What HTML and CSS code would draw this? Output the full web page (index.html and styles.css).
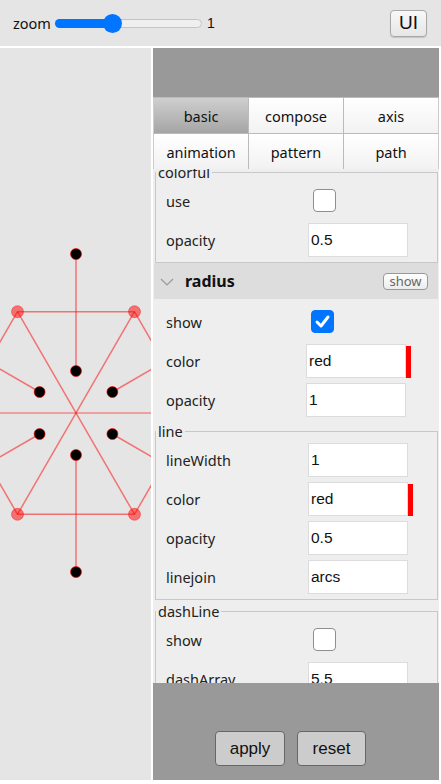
FILE: index.html
```
<!DOCTYPE html>
<html>
<head>
<meta charset="utf-8">
<link rel="stylesheet" href="styles.css">
</head>
<body>
<div class="top">
  <span class="zoom-label">zoom</span>
  <div class="slider"><div class="fill"></div><div class="thumb"></div></div>
  <span class="zoom-val">1</span>
  <button class="ui-btn">UI</button>
</div>
<div class="main">
  <div class="canvas">
    <svg width="151" height="732" viewBox="0 0 151 732">
      <g stroke="rgba(255,0,0,0.5)" stroke-width="1.5" fill="none">
        <line x1="17.5" y1="263.7" x2="134.5" y2="263.7"/>
        <line x1="17.5" y1="466.3" x2="134.5" y2="466.3"/>
        <line x1="17.5" y1="263.7" x2="-41" y2="365"/>
        <line x1="134.5" y1="263.7" x2="193" y2="365"/>
        <line x1="17.5" y1="466.3" x2="-41" y2="365"/>
        <line x1="134.5" y1="466.3" x2="193" y2="365"/>
        <line x1="17.5" y1="263.7" x2="134.5" y2="466.3"/>
        <line x1="134.5" y1="263.7" x2="17.5" y2="466.3"/>
        <line x1="76" y1="206" x2="76" y2="323"/>
        <line x1="76" y1="407" x2="76" y2="524"/>
        <line x1="39.6" y1="344" x2="-61.7" y2="285.5"/>
        <line x1="112.4" y1="344" x2="213.7" y2="285.5"/>
        <line x1="39.6" y1="386" x2="-61.7" y2="444.5"/>
        <line x1="112.4" y1="386" x2="213.7" y2="444.5"/>
      </g>
      <line x1="0" y1="365" x2="151" y2="365" stroke="rgba(255,0,0,0.3)" stroke-width="2"/>
      <g fill="rgba(255,0,0,0.5)" stroke="rgba(255,0,0,0.4)" stroke-width="1">
        <circle cx="17.5" cy="263.7" r="6"/>
        <circle cx="134.5" cy="263.7" r="6"/>
        <circle cx="17.5" cy="466.3" r="6"/>
        <circle cx="134.5" cy="466.3" r="6"/>
      </g>
      <g fill="#000" stroke="rgba(255,0,0,0.6)" stroke-width="1">
        <circle cx="76" cy="206" r="5.5"/>
        <circle cx="76" cy="524" r="5.5"/>
        <circle cx="76" cy="323" r="5.5"/>
        <circle cx="76" cy="407" r="5.5"/>
        <circle cx="39.6" cy="344" r="5.5"/>
        <circle cx="112.4" cy="344" r="5.5"/>
        <circle cx="39.6" cy="386" r="5.5"/>
        <circle cx="112.4" cy="386" r="5.5"/>
      </g>
    </svg>
  </div>
  <div class="panel">
    <div class="panel-head"></div>
    <div class="tabs">
      <div class="tab active">basic</div>
      <div class="tab">compose</div>
      <div class="tab">axis</div>
      <div class="tab">animation</div>
      <div class="tab">pattern</div>
      <div class="tab">path</div>
    </div>
    <div class="content">
      <fieldset class="group first">
        <legend>colorful</legend>
        <div class="row"><span class="label">use</span><span class="ctrl"><span class="check"></span></span></div>
        <div class="row"><span class="label">opacity</span><span class="ctrl"><span class="input">0.5</span></span></div>
      </fieldset>
      <div class="section-head">
        <svg class="chev" width="14" height="10" viewBox="0 0 14 10"><polyline points="1,2 7,8 13,2" fill="none" stroke="#999" stroke-width="1.2"/></svg>
        <span class="section-title">radius</span>
        <span class="mini-btn">show</span>
      </div>
      <div class="plain">
        <div class="row"><span class="label">show</span><span class="ctrl"><span class="check on"><svg width="23" height="23" viewBox="0 0 23 23"><polyline points="6,12 10,16 17,7" fill="none" stroke="#fff" stroke-width="3" stroke-linecap="round" stroke-linejoin="round"/></svg></span></span></div>
        <div class="row"><span class="label">color</span><span class="ctrl"><span class="input">red</span><span class="swatch"></span></span></div>
        <div class="row"><span class="label">opacity</span><span class="ctrl"><span class="input">1</span></span></div>
      </div>
      <fieldset class="group line">
        <legend>line</legend>
        <div class="row"><span class="label">lineWidth</span><span class="ctrl"><span class="input">1</span></span></div>
        <div class="row"><span class="label">color</span><span class="ctrl"><span class="input">red</span><span class="swatch"></span></span></div>
        <div class="row"><span class="label">opacity</span><span class="ctrl"><span class="input">0.5</span></span></div>
        <div class="row"><span class="label">linejoin</span><span class="ctrl"><span class="input">arcs</span></span></div>
      </fieldset>
      <fieldset class="group dash">
        <legend>dashLine</legend>
        <div class="row"><span class="label">show</span><span class="ctrl"><span class="check"></span></span></div>
        <div class="row"><span class="label">dashArray</span><span class="ctrl"><span class="input">5,5</span></span></div>
      </fieldset>
    </div>
    <div class="footer">
      <button class="act">apply</button>
      <button class="act">reset</button>
    </div>
  </div>
</div>
</body>
</html>
```
FILE: styles.css
```
* { box-sizing: border-box; }
html, body { margin: 0; padding: 0; }
body {
  background: #fff;
  width: 441px;
  height: 784px;
  overflow: hidden;
  font-family: "Noto Sans", "Open Sans", sans-serif;
  color: #222;
}
.top {
  height: 46px;
  background: #e5e5e5;
  display: flex;
  align-items: center;
  padding: 0 0 0 13px;
}
.zoom-label { font-size: 14.5px; line-height: 20px; margin-right: 4px; color: #111; }
.slider {
  position: relative;
  width: 147px;
  height: 9px;
  border: 1px solid #c4c4c4;
  border-radius: 5px;
  background: #efefef;
  margin-top: 1px;
}
.fill {
  position: absolute;
  left: -1px; top: -1px;
  width: 58px; height: 9px;
  background: #0075ff;
  border-radius: 5px 0 0 5px;
}
.thumb {
  position: absolute;
  left: 47px; top: -6px;
  width: 19px; height: 19px;
  border-radius: 50%;
  background: #0075ff;
}
.zoom-val { font-family: "Liberation Sans", sans-serif; font-size: 14px; margin-left: 5px; color: #111; }
.ui-btn {
  margin-left: auto;
  margin-right: 14px;
  width: 37px;
  height: 27px;
  padding: 0;
  border: 1px solid #a8a8a8;
  border-radius: 4px;
  background: linear-gradient(#f8f8f8, #e6e6e6);
  font-family: "Liberation Sans", sans-serif;
  font-size: 19px;
  color: #111;
  box-shadow: 0 1px 1px rgba(0,0,0,0.15);
}
.main {
  display: flex;
  gap: 2px;
  margin-top: 2px;
  height: 732px;
}
.canvas {
  width: 151px;
  height: 732px;
  background: #e5e5e5;
  overflow: hidden;
}
.canvas svg { display: block; }
.panel {
  width: 286px;
  height: 732px;
  display: flex;
  flex-direction: column;
  background: #999;
}
.panel-head { height: 49px; background: #999; flex: none; }
.tabs {
  flex: none;
  display: grid;
  grid-template-columns: 96px 95px 95px;
  grid-template-rows: 36px 36px;
  background: #fff;
}
.tab {
  display: flex;
  align-items: center;
  justify-content: center;
  font-size: 14.5px;
  color: #111;
  border-right: 1px solid #bbb;
  border-top: 1px solid #bbb;
  background: linear-gradient(#fff, #f2f2f2);
}
.tab:nth-child(3n) { border-right: 1px solid #ccc; }
.tab:nth-child(3n+1) { border-left: 1px solid #ccc; }
.tab.active { background: linear-gradient(#cfcfcf, #a5a5a5); }
.content {
  flex: 1;
  background: #eee;
  overflow: hidden;
}
.group {
  margin: 0 1px 0 2px;
  padding: 0 0 3px 0;
  border: 1px solid #c8c8c8;
  border-radius: 0;
  min-width: 0;
}
.group.first { margin-top: -6px; }
.group legend {
  padding: 0 2px;
  margin-left: 0;
  font-size: 14.5px;
  line-height: 18px;
  color: #222;
}
.row {
  display: flex;
  align-items: center;
  height: 39px;
  font-size: 14.5px;
  color: #222;
}
.label { width: 152px; padding-left: 11px; flex: none; }
.ctrl { display: flex; align-items: center; }
.input {
  width: 100px;
  height: 34px;
  background: #fff;
  border: 1px solid #dcdcdc;
  display: flex;
  align-items: center;
  padding-left: 2px;
  font-family: "Liberation Sans", sans-serif;
  font-size: 15.5px;
  color: #111;
}
.swatch {
  width: 5px;
  height: 32px;
  background: #f00;
  margin-top: 2px;
}
.check {
  margin-left: 5px;
  width: 23px;
  height: 23px;
  background: #fff;
  border: 1px solid #8f8f8f;
  border-radius: 4px;
  display: block;
}
.check.on {
  background: #0075ff;
  border-color: #0075ff;
  position: relative;
}
.check.on svg { position: absolute; left: -1px; top: -1px; }
.section-head {
  height: 36px;
  background: #ddd;
  margin: 0 1px 0 1px;
  display: flex;
  align-items: center;
  padding-left: 6px;
}
.chev { margin-top: 1px; }
.section-title {
  font-weight: bold;
  font-size: 16px;
  margin-left: 11px;
  color: #111;
}
.mini-btn {
  margin-left: auto;
  margin-right: 10px;
  width: 45px;
  height: 17px;
  border: 1px solid #999;
  border-radius: 4px;
  background: linear-gradient(#fff, #ececec);
  font-size: 13px;
  line-height: 14px;
  color: #666;
  text-align: center;
}
.plain { padding-top: 3px; }
.plain .label { width: 153px; padding-left: 13px; }
.group .label { padding-left: 10px; }
.line { margin-top: 3px; }
.dash { margin-top: 2px; }
.footer {
  flex: none;
  height: 97px;
  background: #999;
  display: flex;
  align-items: flex-start;
  padding-top: 48px;
  padding-left: 62px;
  gap: 12px;
}
.act {
  height: 35px;
  padding: 0;
  border: 1px solid #666;
  border-radius: 4px;
  background: #ccc;
  font-family: "Liberation Sans", sans-serif;
  font-size: 17px;
  color: #111;
}
.act:first-child { width: 70px; }
.act:last-child { width: 69px; }
```
